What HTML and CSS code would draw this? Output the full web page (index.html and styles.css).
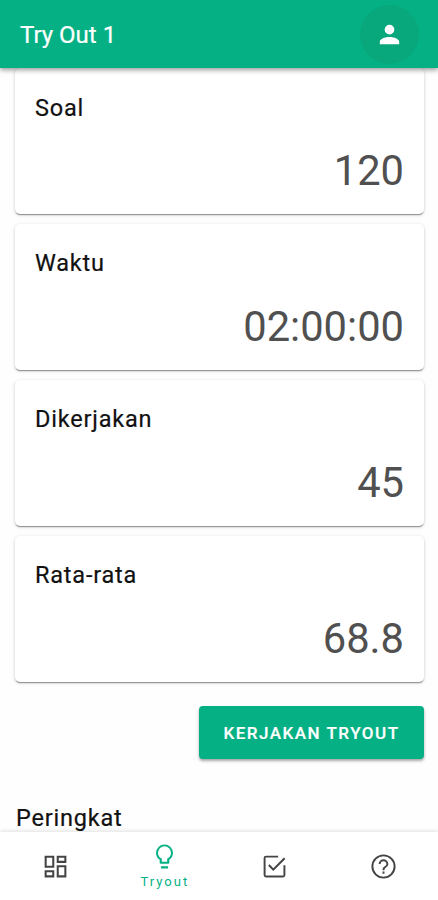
FILE: index.html
```html
<!DOCTYPE html>
<html lang="id">
<head>
  <meta charset="UTF-8" />
  <meta name="viewport" content="width=device-width, initial-scale=1.0"/>
  <title>Try Out 1</title>
  <link rel="stylesheet" href="styles.css">
</head>
<body>
  <div class="app">
    <header class="app-bar">
      <h1>Try Out 1</h1>
      <button class="profile" aria-label="Profil">
        <svg class="icon" viewBox="0 0 24 24"><path d="M12 4a4 4 0 1 1 0 8 4 4 0 0 1 0-8m0 10c4.420 0 8 1.790 8 4v2H4v-2c0-2.210 3.580-4 8-4z"/></svg>
      </button>
    </header>

    <main class="content">
      <div class="card">
        <h2>Soal</h2>
        <p class="value">120</p>
      </div>
      <div class="card">
        <h2>Waktu</h2>
        <p class="value">02:00:00</p>
      </div>
      <div class="card">
        <h2>Dikerjakan</h2>
        <p class="value">45</p>
      </div>
      <div class="card">
        <h2>Rata-rata</h2>
        <p class="value">68.8</p>
      </div>
      <button class="start">Kerjakan Tryout</button>
      <h2 class="rank">Peringkat</h2>
    </main>

    <nav class="bottom-nav">
      <a href="#" aria-label="Dashboard">
        <svg class="icon" viewBox="0 0 24 24"><path d="M19.300 4.700v2.600h-4.600V4.700h4.600M9.300 4.700v6.600H4.700V4.700h4.600m10 8v6.600h-4.600v-6.600h4.600M9.300 16.700v2.600H4.700v-2.600h4.600M21 3h-8v6h8V3M11 3H3v10h8V3m10 8h-8v10h8V11m-10 4H3v6h8v-6z"/></svg>
      </a>
      <a href="#" class="active">
        <svg class="icon" viewBox="0 0 24 24"><path d="M12 2a7 7 0 0 1 7 7c0 2.380-1.190 4.470-3 5.740V17a1 1 0 0 1-1 1H9a1 1 0 0 1-1-1v-2.260C6.190 13.470 5 11.380 5 9a7 7 0 0 1 7-7M9 21v-1h6v1a1 1 0 0 1-1 1h-4a1 1 0 0 1-1-1m3-17.400a5.400 5.400 0 0 0-5.400 5.400c0 2.050 1.330 4.010 3.200 4.780V16.400h4.400v-2.620c1.870-.77 3.200-2.730 3.200-4.780a5.400 5.400 0 0 0-5.400-5.400z"/></svg>
        <span>Tryout</span>
      </a>
      <a href="#" aria-label="Hasil">
        <svg class="icon" viewBox="0 0 24 24"><path d="M19.400 19.400H4.600V4.600H15V3H5a2 2 0 0 0-2 2v14a2 2 0 0 0 2 2h14a2 2 0 0 0 2-2v-8h-1.600m-11.490-.92L6.700 11.300 11 15.700 21 5.800l-1.210-1.220L11 13.370l-3.090-3.290z"/></svg>
      </a>
      <a href="#" aria-label="Bantuan">
        <svg class="icon" viewBox="0 0 24 24"><path d="M11.200 18h1.600v-1.800h-1.600v1.800M12 2a10 10 0 1 0 0 20 10 10 0 0 0 0-20m0 18.400a8.400 8.400 0 1 1 0-16.800 8.400 8.400 0 0 1 0 16.800M12 6a4 4 0 0 0-4 4h1.600a2.400 2.400 0 1 1 4.800 0c0 2-3.200 1.750-3.200 5h1.600c0-2.250 3.200-2.500 3.200-5a4 4 0 0 0-4-4z"/></svg>
      </a>
    </nav>
  </div>
</body>
</html>
```

FILE: styles.css
```css
* {
  box-sizing: border-box;
}

body {
  margin: 0;
  font-family: Roboto, sans-serif;
  background-color: #fefefe;
  color: #111;
}

h1, h2, p {
  margin: 0;
}

button {
  border: none;
  font-family: inherit;
  color: white;
  cursor: pointer;
}

.app {
  display: flex;
  flex-direction: column;
  height: 100vh;
  overflow: hidden;
}

.app-bar {
  display: flex;
  flex: none;
  align-items: center;
  justify-content: space-between;
  height: 68px;
  padding: 0 19px 0 20px;
  background-color: #05b184;
  color: white;
  box-shadow: 0 2px 5px rgba(0, 0, 0, 0.4);
  z-index: 1;
}

.app-bar h1 {
  padding-top: 2px;
  font-size: 24px;
  font-weight: 400;
  line-height: 30px;
  -webkit-text-stroke: 0.200px;
}

.profile {
  display: flex;
  align-items: center;
  justify-content: center;
  width: 59px;
  height: 59px;
  padding: 0;
  border-radius: 50%;
  background-color: #08a87c;
}

.icon {
  display: block;
  width: 29px;
  height: 29px;
  fill: currentColor;
}

.content {
  display: flex;
  flex: 1;
  flex-direction: column;
  gap: 10px;
  min-height: 0;
  padding: 0 14px 0 15px;
  overflow: hidden;
}

.card {
  flex: none;
  height: 146px;
  padding: 24px 20px 0;
  border-radius: 5px;
  background-color: white;
  box-shadow: 0 2px 1px -1px rgba(0, 0, 0, 0.3), 0 1px 2px rgba(0, 0, 0, 0.16), 0 1px 4px rgba(0, 0, 0, 0.12);
}

.card:first-child {
  padding-top: 25px;
}

.card:first-child .value {
  margin-top: 23px;
}

h2 {
  font-size: 23.500px;
  font-weight: 400;
  line-height: 30px;
  letter-spacing: 0.800px;
  -webkit-text-stroke: 0.200px;
}

.value {
  margin-top: 24px;
  font-size: 41.700px;
  line-height: 50px;
  text-align: right;
  color: #505050;
}

.start {
  flex: none;
  align-self: flex-end;
  width: 225px;
  height: 53px;
  margin-top: 14px;
  padding: 0;
  border-radius: 4px;
  background-color: #05b184;
  box-shadow: 0 2px 3px rgba(0, 0, 0, 0.35);
  font-size: 17px;
  font-weight: 500;
  letter-spacing: 1.500px;
  text-transform: uppercase;
  -webkit-text-stroke: 0.200px;
}

.rank {
  margin-top: 34px;
  padding-left: 1px;
}

.bottom-nav {
  display: flex;
  flex: none;
  height: 68px;
  padding-left: 1px;
  background-color: white;
  box-shadow: 0 -1px 4px rgba(0, 0, 0, 0.12);
  z-index: 1;
}

.bottom-nav a {
  display: flex;
  flex: 1;
  flex-direction: column;
  align-items: center;
  justify-content: center;
  color: #444;
  text-decoration: none;
}

.bottom-nav .active {
  padding-top: 2px;
  color: #05b184;
}

.bottom-nav span {
  font-size: 13px;
  line-height: 21px;
  letter-spacing: 2px;
}
```
